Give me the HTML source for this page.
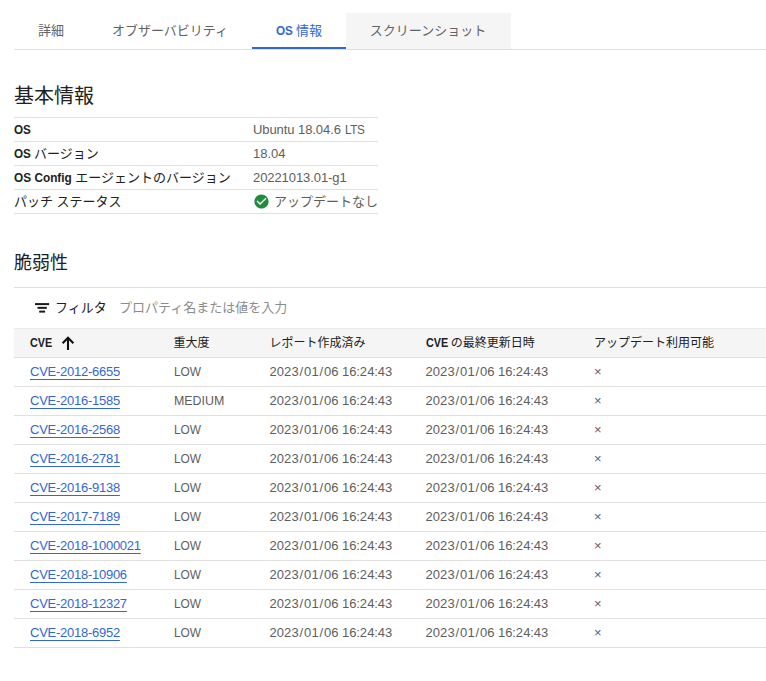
<!DOCTYPE html>
<html lang="ja">
<head>
<meta charset="utf-8">
<title>OS 情報</title>
<style>
html,body{margin:0;padding:0;background:#fff;}
body{width:766px;height:681px;overflow:hidden;position:relative;
  font-family:"Liberation Sans","Noto Sans CJK JP",sans-serif;font-size:13px;color:#212121;}
b{font-weight:700;display:inline-block;transform:scaleX(.9);transform-origin:0 50%;}
b.os{margin-right:-2.3px;}
b.osc{margin-right:-6px;transform:scaleX(.91);}
b.cve{margin-right:-2.8px;}
.tabs{position:absolute;left:14px;top:13px;width:752px;height:36px;border-bottom:1px solid #e0e0e0;}
.tab{position:absolute;top:0;height:36px;line-height:35px;text-align:center;color:#5f6368;font-size:13px;white-space:nowrap;}
.tab.active{color:#3367d6;}
.tab.active:after{content:"";position:absolute;left:0;right:0;bottom:0;height:2px;background:#3367d6;}
.tab.hover{background:#f5f5f5;}
h2{position:absolute;left:14px;margin:0;font-weight:400;font-size:20px;line-height:28px;color:#212121;white-space:nowrap;}
.info{position:absolute;left:14px;top:117px;width:364px;border-top:1px solid #e0e0e0;}
.info .r{height:23px;border-bottom:1px solid #e0e0e0;position:relative;line-height:23px;white-space:nowrap;}
.info .k{position:absolute;left:0;top:0;color:#212121;}
.info .v{position:absolute;left:239px;top:0;color:#5e5e5e;}
.filter{position:absolute;left:14px;top:287px;width:752px;height:40px;border-top:1px solid #e0e0e0;}
.filter .lbl{position:absolute;left:41px;top:0;line-height:39px;color:#212121;}
.filter .ph{position:absolute;left:105px;top:0;line-height:39px;color:#8c8c8c;}
.filter svg{position:absolute;left:21px;top:15px;}
.tbl{position:absolute;left:14px;top:328px;width:752px;}
.tbl .hr{height:28px;background:#f5f5f5;border-top:1px solid #ebebeb;border-bottom:1px solid #e0e0e0;position:relative;line-height:29px;font-size:12px;color:#212121;white-space:nowrap;}
.tbl .row{height:28px;border-bottom:1px solid #e0e0e0;position:relative;line-height:28px;color:#5e5e5e;white-space:nowrap;}
.tbl span{position:absolute;top:0;}
.c1{left:16px}.c2{left:159.5px}.c3{left:255.5px}.c4{left:411.5px}.c5{left:580px}
.tbl a{color:#3367d6;text-decoration:underline;text-decoration-thickness:1px;text-underline-offset:3px;letter-spacing:-.26px;}
.lo{transform:scaleX(.915);transform-origin:0 50%;}
.me{transform:scaleX(.954);transform-origin:0 50%;}
.d{letter-spacing:.07px;}
.d i{font-style:normal;padding:0 .85px;}
.d s{text-decoration:none;margin:0 -.23px;}
.d u{text-decoration:none;margin-right:-.4px;}
</style>
</head>
<body>
<div class="tabs">
  <div class="tab" style="left:0;width:74px">詳細</div>
  <div class="tab" style="left:74px;width:164px">オブザーバビリティ</div>
  <div class="tab active" style="left:238px;width:94px"><b class="os">OS</b> 情報</div>
  <div class="tab hover" style="left:332px;width:164px;padding-right:1px">スクリーンショット</div>
</div>

<h2 style="top:82px">基本情報</h2>
<div class="info">
  <div class="r"><span class="k"><b class="os">OS</b></span><span class="v"><span style="letter-spacing:-.075px">Ubuntu 18.04.6 </span><span id="lts" style="display:inline-block;transform:scaleX(.9);transform-origin:0 50%;letter-spacing:-.5px;margin-left:.3px">LTS</span></span></div>
  <div class="r"><span class="k"><b class="os">OS</b> バージョン</span><span class="v">18.04</span></div>
  <div class="r"><span class="k"><b class="osc">OS Config</b> エージェントのバージョン</span><span class="v" style="letter-spacing:-.08px">20221013.01-g1</span></div>
  <div class="r"><span class="k">パッチ ステータス</span><span class="v"><svg width="17" height="17" viewBox="0 0 24 24" style="position:absolute;left:.2px;top:3.2px"><path d="M12 2C6.48 2 2 6.48 2 12s4.48 10 10 10 10-4.48 10-10S17.52 2 12 2zm-2 15l-5-5 1.41-1.41L10 14.17l7.59-7.59L19 8l-9 9z" fill="#1e8e3e"/></svg><span style="margin-left:21px">アップデートなし</span></span></div>
</div>

<h2 style="top:250px;font-size:18px;line-height:26px">脆弱性</h2>
<div class="filter">
  <svg width="15" height="10" viewBox="0 0 15 10"><rect x="0" y=".1" width="14.1" height="2" fill="#1a1a1a"/><rect x="2.5" y="3.85" width="9.3" height="2" fill="#1a1a1a"/><rect x="4.2" y="7.6" width="5.9" height="2" fill="#1a1a1a"/></svg>
  <span class="lbl">フィルタ</span>
  <span class="ph">プロパティ名または値を入力</span>
</div>

<div class="tbl">
  <div class="hr"><span class="c1"><b class="cve">CVE</b></span><svg width="16" height="16" viewBox="0 0 16 16" style="position:absolute;left:46px;top:6px"><path d="M8 15V2.8M2.6 8.2L8 2.8l5.4 5.4" fill="none" stroke="#111" stroke-width="2.1"/></svg><span class="c2">重大度</span><span class="c3">レポート作成済み</span><span class="c4"><b class="cve">CVE</b> の最終更新日時</span><span class="c5">アップデート利用可能</span></div>
  <div class="row"><span class="c1"><a>CVE-2012-6655</a></span><span class="c2 lo">LOW</span><span class="c3 d">2023<i>/</i>01<i>/</i>06<u> </u>16<s>:</s>24<s>:</s>43</span><span class="c4 d">2023<i>/</i>01<i>/</i>06<u> </u>16<s>:</s>24<s>:</s>43</span><span class="c5">×</span></div>
  <div class="row"><span class="c1"><a>CVE-2016-1585</a></span><span class="c2 me">MEDIUM</span><span class="c3 d">2023<i>/</i>01<i>/</i>06<u> </u>16<s>:</s>24<s>:</s>43</span><span class="c4 d">2023<i>/</i>01<i>/</i>06<u> </u>16<s>:</s>24<s>:</s>43</span><span class="c5">×</span></div>
  <div class="row"><span class="c1"><a>CVE-2016-2568</a></span><span class="c2 lo">LOW</span><span class="c3 d">2023<i>/</i>01<i>/</i>06<u> </u>16<s>:</s>24<s>:</s>43</span><span class="c4 d">2023<i>/</i>01<i>/</i>06<u> </u>16<s>:</s>24<s>:</s>43</span><span class="c5">×</span></div>
  <div class="row"><span class="c1"><a>CVE-2016-2781</a></span><span class="c2 lo">LOW</span><span class="c3 d">2023<i>/</i>01<i>/</i>06<u> </u>16<s>:</s>24<s>:</s>43</span><span class="c4 d">2023<i>/</i>01<i>/</i>06<u> </u>16<s>:</s>24<s>:</s>43</span><span class="c5">×</span></div>
  <div class="row"><span class="c1"><a>CVE-2016-9138</a></span><span class="c2 lo">LOW</span><span class="c3 d">2023<i>/</i>01<i>/</i>06<u> </u>16<s>:</s>24<s>:</s>43</span><span class="c4 d">2023<i>/</i>01<i>/</i>06<u> </u>16<s>:</s>24<s>:</s>43</span><span class="c5">×</span></div>
  <div class="row"><span class="c1"><a>CVE-2017-7189</a></span><span class="c2 lo">LOW</span><span class="c3 d">2023<i>/</i>01<i>/</i>06<u> </u>16<s>:</s>24<s>:</s>43</span><span class="c4 d">2023<i>/</i>01<i>/</i>06<u> </u>16<s>:</s>24<s>:</s>43</span><span class="c5">×</span></div>
  <div class="row"><span class="c1"><a>CVE-2018-1000021</a></span><span class="c2 lo">LOW</span><span class="c3 d">2023<i>/</i>01<i>/</i>06<u> </u>16<s>:</s>24<s>:</s>43</span><span class="c4 d">2023<i>/</i>01<i>/</i>06<u> </u>16<s>:</s>24<s>:</s>43</span><span class="c5">×</span></div>
  <div class="row"><span class="c1"><a>CVE-2018-10906</a></span><span class="c2 lo">LOW</span><span class="c3 d">2023<i>/</i>01<i>/</i>06<u> </u>16<s>:</s>24<s>:</s>43</span><span class="c4 d">2023<i>/</i>01<i>/</i>06<u> </u>16<s>:</s>24<s>:</s>43</span><span class="c5">×</span></div>
  <div class="row"><span class="c1"><a>CVE-2018-12327</a></span><span class="c2 lo">LOW</span><span class="c3 d">2023<i>/</i>01<i>/</i>06<u> </u>16<s>:</s>24<s>:</s>43</span><span class="c4 d">2023<i>/</i>01<i>/</i>06<u> </u>16<s>:</s>24<s>:</s>43</span><span class="c5">×</span></div>
  <div class="row"><span class="c1"><a>CVE-2018-6952</a></span><span class="c2 lo">LOW</span><span class="c3 d">2023<i>/</i>01<i>/</i>06<u> </u>16<s>:</s>24<s>:</s>43</span><span class="c4 d">2023<i>/</i>01<i>/</i>06<u> </u>16<s>:</s>24<s>:</s>43</span><span class="c5">×</span></div>
</div>
</body>
</html>
